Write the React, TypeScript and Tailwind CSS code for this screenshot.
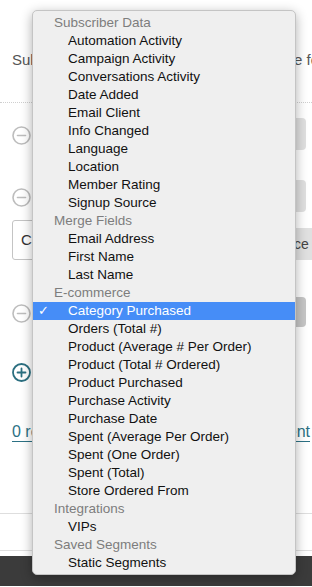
import React from 'react'

type MenuRow = { label: string; header?: boolean; selected?: boolean }

const menuRows: MenuRow[] = [
    { label: 'Subscriber Data', header: true },
    { label: 'Automation Activity' },
    { label: 'Campaign Activity' },
    { label: 'Conversations Activity' },
    { label: 'Date Added' },
    { label: 'Email Client' },
    { label: 'Info Changed' },
    { label: 'Language' },
    { label: 'Location' },
    { label: 'Member Rating' },
    { label: 'Signup Source' },
    { label: 'Merge Fields', header: true },
    { label: 'Email Address' },
    { label: 'First Name' },
    { label: 'Last Name' },
    { label: 'E-commerce', header: true },
    { label: 'Category Purchased', selected: true },
    { label: 'Orders (Total #)' },
    { label: 'Product (Average # Per Order)' },
    { label: 'Product (Total # Ordered)' },
    { label: 'Product Purchased' },
    { label: 'Purchase Activity' },
    { label: 'Purchase Date' },
    { label: 'Spent (Average Per Order)' },
    { label: 'Spent (One Order)' },
    { label: 'Spent (Total)' },
    { label: 'Store Ordered From' },
    { label: 'Integrations', header: true },
    { label: 'VIPs' },
    { label: 'Saved Segments', header: true },
    { label: 'Static Segments' },
]

function MinusCircle() {
    return (
        <svg width="19" height="19" viewBox="0 0 19 19" fill="none">
            <circle cx="9.5" cy="9.5" r="8.5" stroke="#bdbdbd" strokeWidth="1.6" />
            <path d="M5.5 9.5h8" stroke="#bdbdbd" strokeWidth="1.6" strokeLinecap="round" />
        </svg>
    )
}

function PlusCircle() {
    return (
        <svg width="19" height="19" viewBox="0 0 19 19" fill="none">
            <circle cx="9.5" cy="9.5" r="8.5" stroke="#2b6f80" strokeWidth="1.8" />
            <path d="M5.5 9.5h8M9.5 5.5v8" stroke="#2b6f80" strokeWidth="1.8" strokeLinecap="round" />
        </svg>
    )
}

function ConditionRow({ pressed }: { pressed?: boolean }) {
    return (
        <div className="flex items-center justify-between h-full pr-[6px]">
            <div className="pt-[2px]">
                <MinusCircle />
            </div>
            <div
                className={`w-[80px] h-full rounded-[4px] ${pressed ? 'bg-[#c6c6c6]' : 'bg-[#e0e0e0]'}`}
            />
        </div>
    )
}

function PopupMenu() {
    return (
        <div className="absolute left-[32px] top-[10px] w-[264px] h-[565px] rounded-[5px] bg-[#efefef] border border-[#c4c4c4] shadow-[0_3px_12px_rgba(0,0,0,0.32)] pt-[3px] overflow-hidden">
            {menuRows.map((row) =>
                row.header ? (
                    <div
                        key={row.label}
                        className="h-[18px] leading-[18px] pl-[21px] text-[13.5px] text-[#7d7d7d]"
                    >
                        {row.label}
                    </div>
                ) : (
                    <div
                        key={row.label}
                        className={`flex h-[18px] leading-[18px] text-[13.5px] ${
                            row.selected ? 'bg-[#468df7] text-white' : 'text-[#111]'
                        }`}
                    >
                        <span className="w-[35px] pl-[5px] font-['DejaVu_Sans',sans-serif] text-[13px] font-bold">
                            {row.selected ? '✓' : ''}
                        </span>
                        <span>{row.label}</span>
                    </div>
                )
            )}
        </div>
    )
}

export default function App() {
    return (
        <div className="relative w-[312px] h-[587px] overflow-hidden bg-white font-['Liberation_Sans',Arial,sans-serif]">
            <div className="flex flex-col pl-3">
                <div className="h-[103px] -ml-3 pl-3 border-b border-dotted border-[#cfcfcf] pt-[50px]">
                    <div className="flex justify-between text-[15px] leading-[20px] text-[#555] -mr-[20px]">
                        <span>Subscribers</span>
                        <span className="w-[38px] overflow-hidden whitespace-nowrap">e following</span>
                    </div>
                </div>

                <div className="mt-[15px] h-[32px]">
                    <ConditionRow />
                </div>
                <div className="mt-[30px] h-[32px]">
                    <ConditionRow />
                </div>

                <div className="mt-[8px] flex justify-between h-[40px]">
                    <div className="w-[120px] h-full border border-[#c4c4c4] rounded-[3px] px-[8px] flex items-center text-[15px] text-[#333]">
                        Category
                    </div>
                    <div className="self-end h-[32px] w-[96px] -mr-[10px] bg-[#e0e0e0] rounded-l-[3px] flex items-center pl-[68px] overflow-hidden whitespace-nowrap text-[14px] text-[#444]">
                        ce List
                    </div>
                </div>

                <div className="mt-[37px] h-[30px]">
                    <ConditionRow pressed />
                </div>

                <div className="mt-[36px] h-[18px] flex items-center">
                    <PlusCircle />
                </div>

                <div className="mt-[40px] flex justify-between pr-[2px] text-[16px] leading-[22px] text-[#2c7184]">
                    <span className="underline underline-offset-[4px]">0 recipients</span>
                    <span className="underline underline-offset-[4px]">Save Segment</span>
                </div>
            </div>

            <div className="mt-[70px] border-t border-[#dedede] h-[37px]" />
            <div className="border-t border-[#dedede]" />
            <div className="mt-[5px] h-[30px] bg-[#3b3b3b]" />

            <PopupMenu />
        </div>
    )
}
